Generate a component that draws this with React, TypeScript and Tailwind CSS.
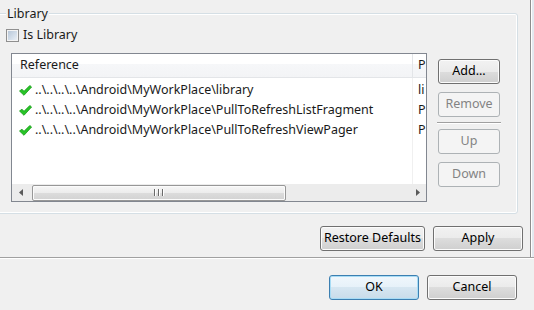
import React from "react";

const rows = [
  { path: "..\\..\\..\\..\\Android\\MyWorkPlace\\library", second: "li" },
  { path: "..\\..\\..\\..\\Android\\MyWorkPlace\\PullToRefreshListFragment", second: "P" },
  { path: "..\\..\\..\\..\\Android\\MyWorkPlace\\PullToRefreshViewPager", second: "P" },
];

function Check() {
  return (
    <svg width="13" height="11" viewBox="0 0 13 11" className="shrink-0">
      <path d="M0.5 6 L3 4.2 L5 6.3 L10.8 0.5 L12.6 2 L5 10.3 Z" fill="#27c427" stroke="#179a17" strokeWidth="0.8" strokeLinejoin="round" />
    </svg>
  );
}

function Btn({
  children,
  className = "",
  disabled = false,
  primary = false,
}: {
  children: React.ReactNode;
  className?: string;
  disabled?: boolean;
  primary?: boolean;
}) {
  const look = disabled
    ? "border-[#adb2b5] bg-[#f4f4f4] text-[#838383]"
    : primary
      ? "border-[#3c7fb1] bg-[linear-gradient(#f0f7fc_0%,#e6f1f9_50%,#d6e6f1_50%,#c9dcea_100%)] shadow-[inset_0_0_0_1px_#a8dcf5] text-black"
      : "border-[#707070] bg-[linear-gradient(#f2f2f2_0%,#ebebeb_50%,#dddddd_50%,#cfcfcf_100%)] shadow-[inset_0_0_0_1px_#fcfcfc] text-black";
  return (
    <button
      type="button"
      className={`h-[25px] shrink-0 rounded-[3px] border flex items-center justify-center leading-none ${look} ${className}`}
    >
      {children}
    </button>
  );
}

export default function App() {
  return (
    <div className="w-[534px] h-[310px] overflow-hidden bg-[#f0f0f0] flex flex-col font-['Noto_Sans',sans-serif] text-[12px] text-[#1a1a1a]">
      <div className="h-[257px] flex shrink-0">
        <div className="w-[531px] border-r border-[#8d8d8d] flex flex-col">
          {/* Library group box */}
          <div className="mt-[13px] ml-[-4px] w-[522px] h-[201px] shrink-0 border border-[#d5dfe5] rounded-[3px] shadow-[inset_0_0_0_1px_#ffffff]">
            <div className="-mt-[8px] ml-[9px] w-fit px-px bg-[#f0f0f0] leading-[16px] text-[12.5px]">Library</div>

            <label className="mt-[7px] ml-[9px] flex items-center gap-[4px] h-[13px] leading-none text-[12.5px]">
              <span className="w-[13px] h-[13px] border border-[#8f8f8f] bg-[linear-gradient(135deg,#b3c3d6_0%,#d6e0eb_60%,#f0f3f7_100%)] shadow-[inset_0_0_0_1px_#f4f4f4]" />
              <span>Is Library</span>
            </label>

            <div className="mt-[11px] ml-[14px] flex">
              {/* table */}
              <div className="w-[416px] h-[149px] border border-[#828790] bg-white flex flex-col">
                <div className="h-[24px] flex border-b border-[#e3e5e8] bg-[linear-gradient(#ffffff_0%,#ffffff_42%,#f6f7f9_42%,#f3f4f6_100%)] shrink-0 text-[12.5px]">
                  <div className="w-[401px] border-r border-[#e3e5e8] pl-[8px] flex items-center">Reference</div>
                  <div className="pl-[5px] flex items-center">P</div>
                </div>
                <div className="flex-1 flex overflow-hidden text-[12.5px]">
                  <div className="w-[401px] border-r border-[#f0f0f0] pt-[2px] flex flex-col">
                    {rows.map((r) => (
                      <div key={r.path} className="h-[20px] flex items-center pl-[7px] gap-[3px] whitespace-nowrap">
                        <Check />
                        <span>{r.path}</span>
                      </div>
                    ))}
                  </div>
                  <div className="pt-[2px] flex flex-col">
                    {rows.map((r) => (
                      <div key={r.path} className="h-[20px] flex items-center pl-[5px]">
                        {r.second}
                      </div>
                    ))}
                  </div>
                </div>
                {/* horizontal scrollbar */}
                <div className="h-[17px] shrink-0 flex items-center bg-[#ececec]">
                  <div className="w-[17px] h-full flex items-center justify-center">
                    <svg width="4" height="7" viewBox="0 0 4 7">
                      <path d="M4 0 L0 3.5 L4 7 Z" fill="#5a5a5a" />
                    </svg>
                  </div>
                  <div className="ml-[3px] w-[254px] h-[16px] rounded-[2px] border border-[#979797] bg-[linear-gradient(#f6f6f6_0%,#ececec_50%,#dcdcdc_51%,#d2d2d2_100%)] shadow-[inset_0_0_0_1px_#fbfbfb] flex items-center justify-center gap-[2px]">
                    {[0, 1, 2].map((i) => (
                      <span key={i} className="w-[2px] h-[7px] border-l border-[#6a6a6a] border-r border-r-white" />
                    ))}
                  </div>
                  <div className="flex-1" />
                  <div className="w-[17px] h-full flex items-center justify-center">
                    <svg width="4" height="7" viewBox="0 0 4 7">
                      <path d="M0 0 L4 3.5 L0 7 Z" fill="#5a5a5a" />
                    </svg>
                  </div>
                </div>
              </div>

              {/* side buttons */}
              <div className="ml-[11px] mt-[6px] flex flex-col text-[12.5px]">
                <Btn className="w-[62px]">Add...</Btn>
                <Btn className="w-[62px] mt-[8px]" disabled>Remove</Btn>
                <div className="w-[64px] -ml-px h-[2px] my-[5px] border-t border-[#a0a0a0] border-b border-b-white" />
                <Btn className="w-[62px]" disabled>Up</Btn>
                <Btn className="w-[62px] mt-[8px]" disabled>Down</Btn>
              </div>
            </div>
          </div>

          <div className="mt-[12px] pr-[7px] flex justify-end gap-[8px] text-[12.5px]">
            <Btn className="w-[105px]">Restore Defaults</Btn>
            <Btn className="w-[90px]">Apply</Btn>
          </div>
        </div>
        <div className="flex-1 bg-[#e4e9ef] border-l border-white" />
      </div>
      <div className="h-px bg-[#a0a0a0] shrink-0" />
      <div className="h-px bg-white shrink-0" />

      <div className="pt-[16px] pr-[17px] flex justify-end gap-[8px] text-[12.5px]">
        <Btn className="w-[90px]" primary>OK</Btn>
        <Btn className="w-[90px]">Cancel</Btn>
      </div>
    </div>
  );
}
